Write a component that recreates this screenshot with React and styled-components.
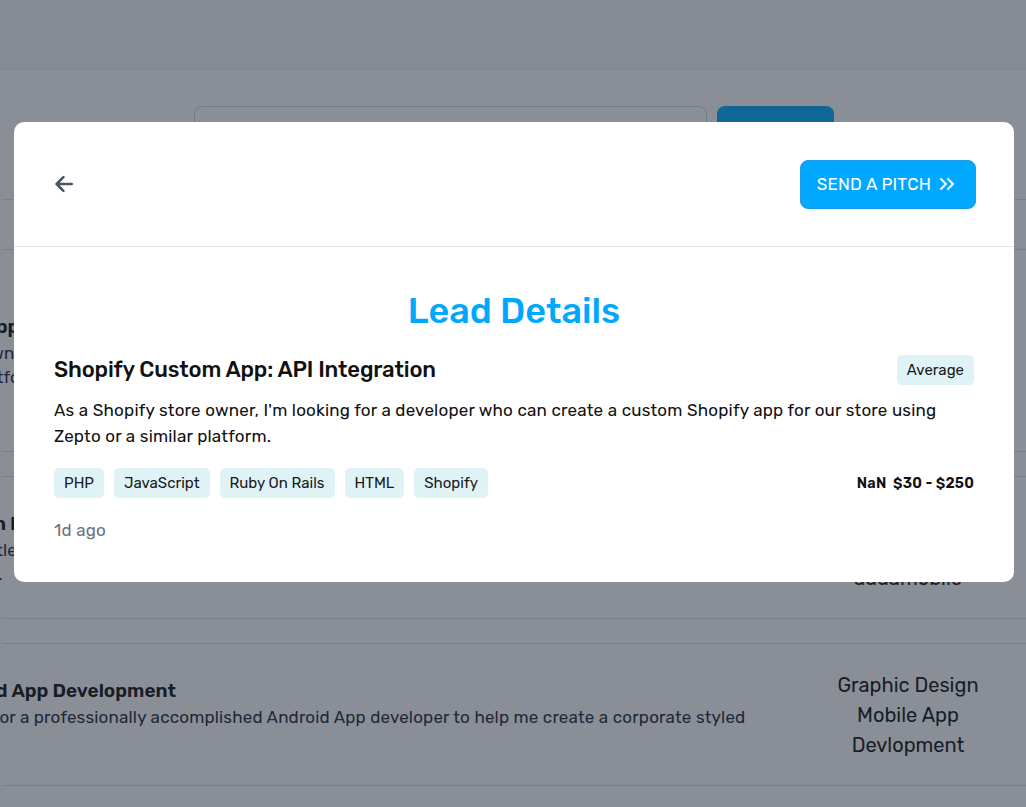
import React from "react";
import styled, { createGlobalStyle } from "styled-components";
import { ChevronsRight } from "lucide-react";

const Global = createGlobalStyle`
  html, body { margin: 0; padding: 0; background: #ffffff; }
  body { font-family: "Rubik", Inter, "Noto Sans", sans-serif; color: #111827; }
  * { box-sizing: border-box; }
`;

const Page = styled.div`
  min-height: 807px;
  padding-left: 2px;
  background: #ffffff;
  overflow: hidden;
`;

const TopBar = styled.header`
  height: 70px;
  margin-left: -2px;
  background: #f4f5f7;
  border-bottom: 1px solid #eceef1;
`;

const SearchRow = styled.div`
  display: flex;
  justify-content: center;
  gap: 10px;
  margin-top: 36px;
`;

const SearchInput = styled.input`
  width: 513px;
  height: 48px;
  border: 1px solid #cfd3d9;
  border-radius: 8px;
  background: #ffffff;
`;

const SearchButton = styled.button`
  width: 117px;
  height: 48px;
  border: none;
  border-radius: 8px;
  background: #00aaff;
  color: #ffffff;
  padding-top: 14px;
  font: 500 16px "Rubik", Inter, sans-serif;
`;

const ListHeader = styled.div`
  margin-top: 45px;
  height: 50px;
  border-top: 1px solid #dcdfe4;
`;

const Row = styled.div`
  display: flex;
  align-items: center;
  gap: 60px;
  padding: 25.5px 28px;
  border-top: 1px solid #dcdfe4;
  border-bottom: 1px solid #dcdfe4;
  margin-bottom: 24px;
`;

const LeftCol = styled.div`
  flex: 1;
  margin-left: -200px;
`;

const RowTitle = styled.div`
  font-size: 19px;
  font-weight: 600;
  line-height: 28px;
  color: #111;
`;

const RowDesc = styled.div`
  font-size: 17px;
  line-height: 24px;
  letter-spacing: 0.17px;
  color: #1f2937;
`;

const RightCol = styled.div`
  width: 180px;
  text-align: center;
  font-size: 20px;
  line-height: 30px;
  color: #111;
`;

const Overlay = styled.div`
  position: fixed;
  inset: 0;
  background: rgba(31, 41, 55, 0.52);
  display: flex;
  justify-content: center;
  align-items: flex-start;
  padding: 122px 0 0 2px;
`;

const Modal = styled.div`
  width: 1000px;
  background: #ffffff;
  border-radius: 10px;
  overflow: hidden;
`;

const ModalHeader = styled.div`
  height: 125px;
  border-bottom: 1px solid #e5e7eb;
  display: flex;
  align-items: center;
  justify-content: space-between;
  padding: 0 38px 0 41px;
`;

const BackButton = styled.button`
  border: none;
  background: transparent;
  padding: 0;
  width: 18px;
  height: 18px;
  display: flex;
  color: #4b5563;
  cursor: pointer;
`;

const PitchButton = styled.button`
  display: flex;
  align-items: center;
  gap: 4px;
  height: 49px;
  padding: 0 16px 0 16px;
  background: #00a8ff;
  border: 1px solid #1b9be6;
  border-radius: 8px;
  color: #ffffff;
  font: 400 17px "Rubik", Inter, sans-serif;
  text-transform: uppercase;
  letter-spacing: 0.2px;
  cursor: pointer;
`;

const Body = styled.div`
  padding: 42px 40px 40px;
`;

const Heading = styled.h2`
  margin: 0;
  text-align: center;
  font-size: 36px;
  line-height: 43px;
  font-weight: 500;
  color: #00a8fb;
`;

const TitleRow = styled.div`
  margin-top: 23px;
  display: flex;
  align-items: center;
  justify-content: space-between;
`;

const LeadTitle = styled.h3`
  margin: 0;
  font-size: 22px;
  line-height: 30px;
  font-weight: 500;
  letter-spacing: -0.15px;
  color: #111;
`;

const Pill = styled.span`
  display: inline-flex;
  align-items: center;
  height: 30px;
  padding: 0 10px;
  border-radius: 5px;
  background: #dff3f7;
  font-size: 15px;
  color: #1a1a1a;
`;

const Description = styled.p`
  margin: 12px 0 0;
  font-size: 17px;
  line-height: 26px;
  letter-spacing: 0.2px;
  color: #111;
`;

const TagRow = styled.div`
  margin-top: 19px;
  display: flex;
  align-items: center;
  justify-content: space-between;
`;

const Tags = styled.div`
  display: flex;
  gap: 10px;
`;

const Budget = styled.div`
  font-size: 14.5px;
  font-weight: 600;
  white-space: pre;
  letter-spacing: 0.15px;
  color: #111;
`;

const Posted = styled.div`
  margin-top: 20px;
  font-size: 17px;
  line-height: 24px;
  letter-spacing: 0.2px;
  color: #6b7280;
`;

const rows = [
  {
    title: "Shopify Custom App: API Integration",
    desc: "As a Shopify store owner, I'm looking for a developer who can create a custom Shopify app for our store using Zepto or a similar platform.",
    cats: ["Web Development", "Shopify", "App", "API", "Integration"],
  },
  {
    title: "Shopify: Collection layout redesign",
    desc: "We need a creative title banner and custom collection page for our store with filters and a clean responsive layout that works on mobile.",
    cats: ["Web Design", "Shopify", "addamobile"],
  },
  {
    title: "Corporate: Android App Development",
    desc: "Hi there, I'm looking for a professionally accomplished Android App developer to help me create a corporate styled app.",
    cats: ["Graphic Design", "Mobile App", "Devlopment"],
  },
  {
    title: "Website Redesign",
    desc: "Looking for a web designer to refresh our company website.",
    cats: ["Web Design"],
  },
];

const tags = ["PHP", "JavaScript", "Ruby On Rails", "HTML", "Shopify"];

export default function App() {
  return (
    <>
      <Global />
      <Page>
        <TopBar />
        <SearchRow>
          <SearchInput />
          <SearchButton>Search</SearchButton>
        </SearchRow>
        <ListHeader />
        {rows.map((r) => (
          <Row key={r.title}>
            <LeftCol>
              <RowTitle>{r.title}</RowTitle>
              <RowDesc>{r.desc}</RowDesc>
            </LeftCol>
            <RightCol>
              {r.cats.map((c) => (
                <div key={c}>{c}</div>
              ))}
            </RightCol>
          </Row>
        ))}
      </Page>
      <Overlay>
        <Modal>
          <ModalHeader>
            <BackButton aria-label="Back">
              <svg width="18" height="18" viewBox="0 0 18 18" fill="none">
                <path
                  d="M16.8 9H1.6M8.4 2.2L1.6 9l6.8 6.8"
                  stroke="currentColor"
                  strokeWidth="2.6"
                  strokeLinecap="round"
                  strokeLinejoin="round"
                />
              </svg>
            </BackButton>
            <PitchButton>
              Send a pitch
              <ChevronsRight size={24} strokeWidth={2} />
            </PitchButton>
          </ModalHeader>
          <Body>
            <Heading>Lead Details</Heading>
            <TitleRow>
              <LeadTitle>Shopify Custom App: API Integration</LeadTitle>
              <Pill>Average</Pill>
            </TitleRow>
            <Description>
              As a Shopify store owner, I'm looking for a developer who can create a custom Shopify app for our store
              using Zepto or a similar platform.
            </Description>
            <TagRow>
              <Tags>
                {tags.map((t) => (
                  <Pill key={t}>{t}</Pill>
                ))}
              </Tags>
              <Budget>{"NaN  $30 - $250"}</Budget>
            </TagRow>
            <Posted>1d ago</Posted>
          </Body>
        </Modal>
      </Overlay>
    </>
  );
}
